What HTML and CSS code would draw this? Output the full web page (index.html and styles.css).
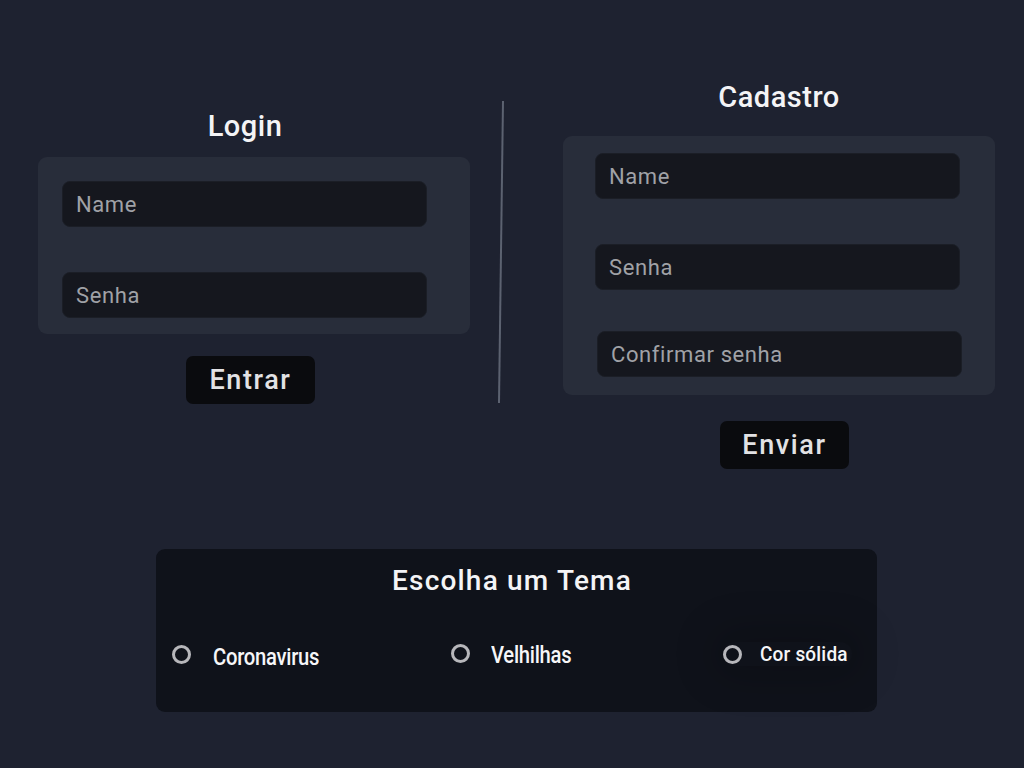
FILE: index.html
```html
<!DOCTYPE html>
<html lang="pt">
<head>
<meta charset="utf-8">
<title>Login / Cadastro</title>
<link rel="stylesheet" href="styles.css">
</head>
<body>
<main class="page">
  <section class="top">
    <div class="col col-login">
      <h2 class="title title-login">Login</h2>
      <form class="panel panel-login">
        <input class="field" type="text" placeholder="Name">
        <input class="field" type="password" placeholder="Senha">
      </form>
      <button class="btn btn-login" type="button">Entrar</button>
    </div>
    <div class="divider"></div>
    <div class="col col-cad">
      <h2 class="title title-cad">Cadastro</h2>
      <form class="panel panel-cad">
        <input class="field" type="text" placeholder="Name">
        <input class="field" type="password" placeholder="Senha">
        <input class="field field-confirm" type="password" placeholder="Confirmar senha">
      </form>
      <button class="btn btn-cad" type="button">Enviar</button>
    </div>
  </section>
  <section class="theme">
    <h2 class="theme-title">Escolha um Tema</h2>
    <div class="options">
      <label class="opt"><span class="radio"></span><span class="opt-text">Coronavirus</span></label>
      <label class="opt"><span class="radio"></span><span class="opt-text">Velhilhas</span></label>
      <label class="opt opt-solid"><span class="radio"></span><span class="opt-text opt-small">Cor sólida</span></label>
    </div>
  </section>
</main>
</body>
</html>
```
FILE: styles.css
```css
* { box-sizing: border-box; }
html, body { margin: 0; padding: 0; }
body {
  background: #1e2230;
  font-family: Roboto, "Liberation Sans", sans-serif;
  color: #ffffff;
  width: 1024px;
  height: 768px;
  overflow: hidden;
}
.page { display: flex; flex-direction: column; }
.top {
  display: flex;
  align-items: flex-start;
  padding-left: 38px;
}
.col { display: flex; flex-direction: column; width: 432px; }
.title {
  margin: 0;
  font-size: 29px;
  font-weight: 500;
  letter-spacing: 0.5px;
  line-height: 36px;
  height: 36px;
  text-align: center;
  color: #f4f4f6;
}
.col-login { margin-top: 108px; }
.title-login { margin-right: 18px; margin-bottom: 13px; }
.col-cad { margin-top: 79px; margin-left: 61px; }
.title-cad { margin-bottom: 21px; }
.panel {
  background: #282d3a;
  border-radius: 9px;
  display: flex;
  flex-direction: column;
  margin: 0;
}
.panel-login { padding: 24px 43px 16px 24px; gap: 45px; }
.panel-cad { padding: 17px 35px 18px 32px; gap: 45px; }
.field {
  height: 46px;
  width: 365px;
  background: #15171e;
  border: 1px solid #1b1e26;
  border-radius: 8px;
  padding: 0 13px;
  font-family: Roboto, "Liberation Sans", sans-serif;
  font-size: 22px;
  letter-spacing: 0.6px;
  color: #a3a5aa;
  outline: none;
}
.field::placeholder { color: #a0a2a7; }
.field-confirm { margin-top: -4px; margin-left: 2px; }
.divider {
  width: 2px;
  height: 302px;
  background: #5c6270;
  margin-top: 101px;
  margin-left: 30px;
  transform: rotate(0.76deg);
}
.btn {
  height: 48px;
  width: 129px;
  background: #0a0b0e;
  border: none;
  border-radius: 7px;
  color: #e2e2e4;
  font-family: Roboto, "Liberation Sans", sans-serif;
  font-size: 27px;
  font-weight: 500;
  letter-spacing: 1.6px;
  align-self: center;
  padding: 0;
}
.btn-login { margin-top: 22px; margin-right: 7px; }
.btn-cad { margin-top: 26px; margin-left: 11px; }
.theme {
  margin-top: 80px;
  margin-left: 156px;
  width: 721px;
  height: 163px;
  background: #0f121a;
  border-radius: 9px;
  padding: 14px 30px 0 16px;
}
.theme-title {
  margin: 0;
  text-align: center;
  font-size: 28px;
  font-weight: 500;
  letter-spacing: 1.2px;
  line-height: 36px;
  color: #f4f4f6;
  padding-left: 5px;
}
.options {
  display: grid;
  grid-template-columns: 279px 272px auto;
  margin-top: 43px;
}
.opt {
  display: flex;
  align-items: center;
  height: 24px;
}
.radio {
  width: 19px;
  height: 19px;
  border: 3px solid #b7b7bb;
  border-radius: 50%;
  flex: none;
}
.opt-text {
  display: inline-block;
  margin-left: 22px;
  font-size: 23px;
  font-weight: 500;
  letter-spacing: -0.3px;
  color: #f6f6f8;
  position: relative;
  top: 3px;
  transform: scaleX(0.88);
  transform-origin: left center;
  white-space: nowrap;
}
.opt:nth-child(2) .radio { position: relative; top: -1px; }
.opt:nth-child(2) .opt-text { margin-left: 21px; top: 1px; }
.opt-solid { box-shadow: 0 0 40px 12px rgba(0,0,0,0.18); border-radius: 30px; }
.opt-small { margin-left: 18px; font-size: 20px; letter-spacing: 0.2px; top: 0; transform: scaleX(0.95); }
```
